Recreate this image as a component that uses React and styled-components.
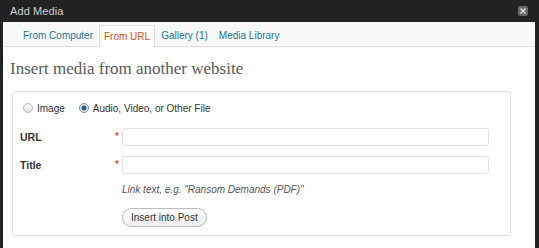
import React, { useState } from "react";
import styled, { createGlobalStyle } from "styled-components";

const GlobalStyle = createGlobalStyle`
  body {
    margin: 0;
    background: #222;
    font-family: "Liberation Sans", Arial, sans-serif;
  }
`;

const Frame = styled.div`
  width: 539px;
  height: 248px;
  box-sizing: border-box;
  padding: 0 4px 0 3px;
  background: #222;
  display: flex;
  flex-direction: column;
  overflow: hidden;
`;

const TitleBar = styled.div`
  height: 22px;
  flex: none;
  display: flex;
  align-items: center;
  justify-content: space-between;
  padding: 0 7px;
`;

const Title = styled.span`
  color: #cfcfcf;
  font-size: 11px;
  letter-spacing: 0.1px;
`;

const CloseButton = styled.button`
  width: 10px;
  height: 10px;
  padding: 0;
  border: none;
  border-radius: 2px;
  background: #666;
  display: flex;
  align-items: center;
  justify-content: center;
  cursor: pointer;
`;

const Content = styled.div`
  flex: 1;
  background: #fff;
`;

const TabBar = styled.div`
  height: 25px;
  box-sizing: border-box;
  background: #f9f9f9;
  border-bottom: 1px solid #dfdfdf;
  display: flex;
  align-items: flex-end;
  gap: 1px;
  padding-left: 15px;
`;

const Tab = styled.a`
  height: 22px;
  box-sizing: border-box;
  padding: 0 4px;
  line-height: 21px;
  font-size: 10px;
  text-decoration: none;
  cursor: pointer;
  color: ${(p) => (p.$active ? "#d54e21" : "#21759b")};
  background: ${(p) => (p.$active ? "#fff" : "transparent")};
  border: 1px solid ${(p) => (p.$active ? "#dfdfdf" : "transparent")};
  border-bottom: none;
  margin-bottom: ${(p) => (p.$active ? "-1px" : "0")};
`;

const Heading = styled.h3`
  margin: 12px 0 12px 7px;
  font-family: "Liberation Serif", Georgia, serif;
  font-weight: normal;
  font-size: 17px;
  line-height: 20px;
  color: #5a5a5a;
`;

const Box = styled.div`
  margin: 0 24px 0 9px;
  border: 1px solid #dfdfdf;
  border-radius: 3px;
  padding: 10px 7px 8px;
`;

const RadioRow = styled.div`
  display: flex;
  align-items: center;
  height: 12px;
  margin-left: 3px;
  gap: 14px;
`;

const RadioLabel = styled.label`
  display: flex;
  align-items: center;
  gap: 4px;
  font-size: 10px;
  color: #333;
  cursor: pointer;
`;

const Radio = styled.input`
  appearance: none;
  margin: 0;
  width: 10px;
  height: 10px;
  border-radius: 50%;
  border: 1px solid #b5b5b5;
  box-sizing: border-box;
  background: linear-gradient(#ffffff, #dcdcdc);
  cursor: pointer;

  &:checked {
    border-color: #8a8a8a;
    background: radial-gradient(circle, #1c5e8f 0 2px, #6fa0c4 2.5px, #e8e8e8 3px);
  }
`;

const FormGrid = styled.div`
  display: grid;
  grid-template-columns: 95px 7px 367px;
  row-gap: 10px;
  margin-top: 14px;
`;

const FieldLabel = styled.label`
  font-size: 10.5px;
  font-weight: bold;
  color: #333;
  line-height: 18px;
`;

const Required = styled.span`
  color: #e00;
  font-size: 10px;
  line-height: 10px;
  padding-top: 4px;
`;

const TextInput = styled.input`
  height: 18px;
  box-sizing: border-box;
  border: 1px solid #dfdfdf;
  border-radius: 3px;
  background: #fff;
  padding: 0 4px;
  font-size: 10px;
  outline: none;
`;

const Help = styled.p`
  grid-column: 3;
  margin: 0;
  font-size: 10px;
  line-height: 12px;
  font-style: italic;
  color: #555;
`;

const ButtonCell = styled.div`
  grid-column: 3;
  margin-top: 1px;
`;

const PillButton = styled.button`
  height: 19px;
  padding: 0 8px;
  border: 1px solid #bbb;
  border-radius: 11px;
  background: linear-gradient(#fefefe, #efefef);
  font-family: "Liberation Sans", Arial, sans-serif;
  font-size: 10px;
  color: #333;
  cursor: pointer;
`;

const tabs = ["From Computer", "From URL", "Gallery (1)", "Media Library"];

const App = () => {
  const [activeTab, setActiveTab] = useState(1);
  const [type, setType] = useState("file");

  return (
    <Frame>
      <GlobalStyle />
      <TitleBar>
        <Title>Add Media</Title>
        <CloseButton aria-label="Close">
          <svg width="6" height="6" viewBox="0 0 6 6">
            <path d="M0.5 0.5 L5.5 5.5 M5.5 0.5 L0.5 5.5" stroke="#e0e0e0" strokeWidth="1.4" />
          </svg>
        </CloseButton>
      </TitleBar>
      <Content>
        <TabBar>
          {tabs.map((item, index) => (
            <Tab key={index} $active={activeTab === index} onClick={() => setActiveTab(index)}>
              {item}
            </Tab>
          ))}
        </TabBar>
        <Heading>Insert media from another website</Heading>
        <Box>
          <RadioRow>
            <RadioLabel>
              <Radio type="radio" name="type" checked={type === "image"} onChange={() => setType("image")} />
              Image
            </RadioLabel>
            <RadioLabel>
              <Radio type="radio" name="type" checked={type === "file"} onChange={() => setType("file")} />
              Audio, Video, or Other File
            </RadioLabel>
          </RadioRow>
          <FormGrid>
            <FieldLabel>URL</FieldLabel>
            <Required>*</Required>
            <TextInput />
            <FieldLabel>Title</FieldLabel>
            <Required>*</Required>
            <TextInput />
            <Help>Link text, e.g. "Ransom Demands (PDF)"</Help>
            <ButtonCell>
              <PillButton>Insert into Post</PillButton>
            </ButtonCell>
          </FormGrid>
        </Box>
      </Content>
    </Frame>
  );
};

export default App;
